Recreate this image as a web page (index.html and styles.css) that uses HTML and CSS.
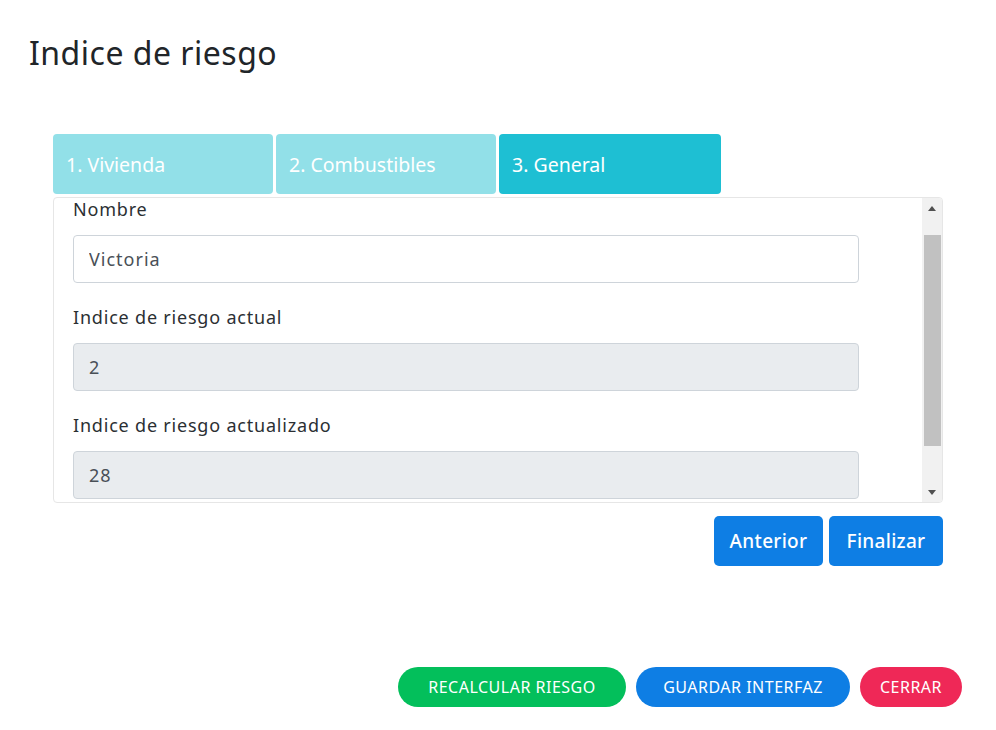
FILE: index.html
```html
<!DOCTYPE html>
<html lang="es">
<head>
<meta charset="utf-8">
<title>Indice de riesgo</title>
<link rel="stylesheet" href="styles.css">
</head>
<body>
<div class="modal">
  <h1 class="title">Indice de riesgo</h1>
  <div class="wizard">
    <div class="tabs">
      <div class="tab">1. Vivienda</div>
      <div class="tab">2. Combustibles</div>
      <div class="tab active">3. General</div>
    </div>
    <div class="panel">
      <div class="viewport" id="viewport">
        <div class="form">
          <div class="group">
            <label class="label">Nombre</label>
            <input class="input" type="text" value="Victoria">
          </div>
          <div class="group">
            <label class="label">Indice de riesgo actual</label>
            <input class="input" type="text" value="2" disabled>
          </div>
          <div class="group last">
            <label class="label">Indice de riesgo actualizado</label>
            <input class="input" type="text" value="28" disabled>
          </div>
        </div>
      </div>
      <div class="scrollbar">
        <div class="sb-btn"><span class="arrow up"></span></div>
        <div class="sb-track"><div class="sb-thumb"></div></div>
        <div class="sb-btn"><span class="arrow down"></span></div>
      </div>
    </div>
    <div class="nav">
      <button class="btn-nav anterior">Anterior</button>
      <button class="btn-nav finalizar">Finalizar</button>
    </div>
  </div>
  <div class="footer">
    <button class="pill green">RECALCULAR RIESGO</button>
    <button class="pill blue">GUARDAR INTERFAZ</button>
    <button class="pill red">CERRAR</button>
  </div>
</div>
<script src="script.js"></script>
</body>
</html>
```
FILE: styles.css
```css
* { box-sizing: border-box; }
html, body { margin: 0; padding: 0; background: #fff; }
body {
  font-family: "Noto Sans", "DejaVu Sans", sans-serif;
  color: #212529;
  width: 996px;
  height: 730px;
  overflow: hidden;
}
.modal { display: flex; flex-direction: column; height: 730px; }
.title {
  margin: 0;
  padding: 33px 0 0 29px;
  font-size: 32px;
  line-height: 40px;
  font-weight: 400;
  color: #212529;
  letter-spacing: 0.5px;
}
.wizard {
  margin: 61px 0 0 53px;
  width: 890px;
}
.tabs { display: flex; gap: 3px; }
.tab {
  width: 220px;
  height: 60px;
  padding: 0 13px;
  display: flex;
  align-items: center;
  background: #92e0e8;
  color: #fff;
  font-size: 19.5px;
  border-radius: 4px;
}
.tab.active { background: #1ebfd3; width: 222px; }
.panel {
  margin-top: 3px;
  height: 306px;
  border: 1px solid #e6e6e6;
  border-radius: 4px;
  display: flex;
  overflow: hidden;
}
.viewport {
  flex: 1;
  overflow: hidden;
}
.scrollbar {
  width: 20px;
  display: flex;
  flex-direction: column;
  background: #f1f1f1;
}
.sb-btn {
  height: 20px;
  display: flex;
  align-items: center;
  justify-content: center;
}
.arrow {
  width: 0;
  height: 0;
  border-left: 4px solid transparent;
  border-right: 4px solid transparent;
}
.arrow.up { border-bottom: 5px solid #505050; }
.arrow.down { border-top: 5px solid #505050; }
.sb-track {
  flex: 1;
  padding: 17px 1px 0 2px;
}
.sb-thumb {
  height: 211px;
  background: #c1c1c1;
}
.form {
  padding: 22px 64px 55px 19px;
}
.group { display: flex; flex-direction: column; margin-bottom: 21px; }
.group.last { margin-bottom: 0; }
.label {
  font-size: 18px;
  line-height: 27px;
  margin-bottom: 12px;
  color: #2b2f33;
  letter-spacing: 0.8px;
}
.input {
  height: 48px;
  width: 786px;
  border: 1px solid #ced4da;
  border-radius: 4px;
  padding: 0 15px;
  font-family: inherit;
  font-size: 18px;
  letter-spacing: 1px;
  color: #495057;
  background: #fff;
}
.input:disabled { background: #e9ecef; color: #495057; }
.nav {
  display: flex;
  justify-content: flex-end;
  gap: 6px;
  margin-top: 13px;
}
.btn-nav {
  height: 50px;
  padding: 0;
  border: 0;
  border-radius: 5px;
  background: #0e7ee4;
  color: #fff;
  font-family: inherit;
  font-size: 19px;
  font-weight: 500;
  letter-spacing: 0.3px;
}
.btn-nav.anterior { width: 109px; }
.btn-nav.finalizar { width: 114px; }
.footer {
  margin-top: auto;
  margin-bottom: 23px;
  display: flex;
  justify-content: flex-end;
  gap: 10px;
  padding-right: 34px;
}
.pill {
  height: 40px;
  border: 0;
  border-radius: 20px;
  color: #fff;
  font-family: inherit;
  font-size: 16px;
  font-weight: 400;
  letter-spacing: 0.5px;
  padding: 0;
}
.pill.green { background: #03bf5b; width: 228px; }
.pill.blue { background: #0e7ee4; width: 214px; }
.pill.red { background: #ef2857; width: 102px; }
```
FILE: script.js
```js
document.getElementById('viewport').scrollTop = 24;
```
